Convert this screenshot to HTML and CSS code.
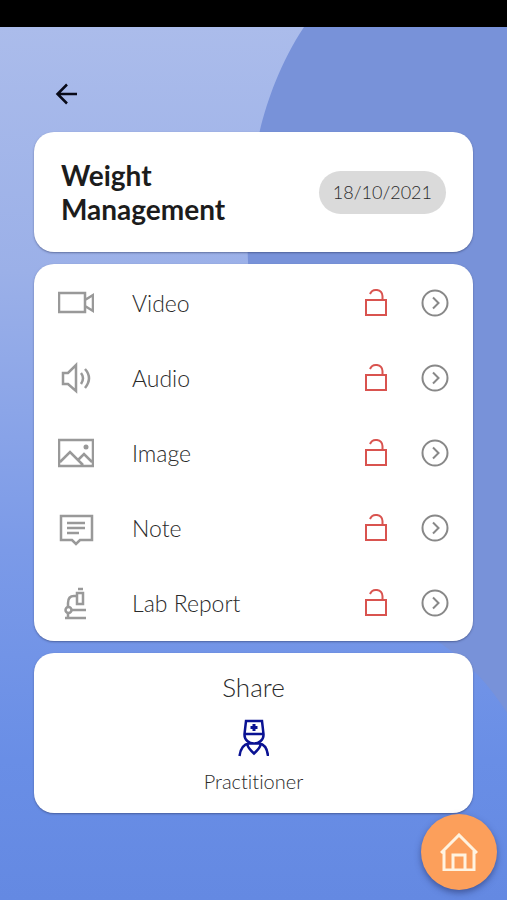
FILE: index.html
```html
<!DOCTYPE html>
<html lang="en">
<head>
  <meta charset="UTF-8" />
  <meta name="viewport" content="width=device-width, initial-scale=1.0" />
  <title>Weight Management</title>
  <link rel="stylesheet" href="styles.css">
</head>
<body>
  <svg width="0" height="0" class="sprite" aria-hidden="true">
    <symbol id="lock" viewBox="0 0 24 30">
      <path d="M2 12H22V27H2ZM18.500 12V8A6.500 6.500 0 0 0 6 6" />
    </symbol>
    <symbol id="next" viewBox="0 0 28 28">
      <circle cx="14" cy="14" r="12.500" />
      <path d="M12 8.500L17.500 14L12 19.500" />
    </symbol>
  </svg>

  <div class="status-bar"></div>
  <div class="screen">
    <svg class="backdrop" viewBox="0 0 507 872" preserveAspectRatio="none" aria-hidden="true">
      <path d="M304 0C281 34 267 74 260 103C250 150 246 190 248 234C252 392 320 522 440 615C470 636 490 658 507 685V0Z" />
    </svg>

    <header class="top">
      <button class="back" aria-label="Back">
        <svg viewBox="0 0 24 24"><path d="M22 12H3M12 2.500L2.500 12L12 21.500" /></svg>
      </button>
    </header>

    <main class="cards">
      <section class="card title-card">
        <h1>Weight Management</h1>
        <time class="date" datetime="2021-10-18">18/10/2021</time>
      </section>

      <ul class="card list">
        <li class="row">
          <svg class="icon" viewBox="0 0 36 36"><path d="M1 8H27V27H1ZM27 15L35 10V26L27 21" /></svg>
          <span class="label">Video</span>
          <button class="lock" aria-label="Unlock video"><svg><use href="#lock" /></svg></button>
          <button class="next" aria-label="Open video"><svg><use href="#next" /></svg></button>
        </li>
        <li class="row">
          <svg class="icon" viewBox="0 0 36 36"><path d="M5 13H10L18 5V31L10 24H5ZM23 13Q27 18 23 24M27 9Q35 18 27 28" /></svg>
          <span class="label">Audio</span>
          <button class="lock" aria-label="Unlock audio"><svg><use href="#lock" /></svg></button>
          <button class="next" aria-label="Open audio"><svg><use href="#next" /></svg></button>
        </li>
        <li class="row">
          <svg class="icon" viewBox="0 0 36 36"><path d="M1 5H35V31H1ZM2 27L12 17L25 30M20 25L26 19L34 27" /><circle class="dot" cx="28" cy="12" r="2.500" /></svg>
          <span class="label">Image</span>
          <button class="lock" aria-label="Unlock image"><svg><use href="#lock" /></svg></button>
          <button class="next" aria-label="Open image"><svg><use href="#next" /></svg></button>
        </li>
        <li class="row">
          <svg class="icon" viewBox="0 0 36 36"><path d="M3 6H34V30H22L18 34L14 30H3ZM9 13H27M9 18H27M9 23H21" /></svg>
          <span class="label">Note</span>
          <button class="lock" aria-label="Unlock note"><svg><use href="#lock" /></svg></button>
          <button class="next" aria-label="Open note"><svg><use href="#next" /></svg></button>
        </li>
        <li class="row">
          <svg class="icon" viewBox="0 0 36 36"><path d="M7 33H28M14 25H28M10 28V33M10 22V18Q10 11 16 11H19M19 8H25V19H19ZM20 4H25" /><circle cx="10.500" cy="25" r="3" /></svg>
          <span class="label">Lab Report</span>
          <button class="lock" aria-label="Unlock lab report"><svg><use href="#lock" /></svg></button>
          <button class="next" aria-label="Open lab report"><svg><use href="#next" /></svg></button>
        </li>
      </ul>

      <section class="card share">
        <h2>Share</h2>
        <button class="practitioner">
          <svg viewBox="0 0 32 38"><path d="M9 2H25L26.500 15V16A9.500 8.500 0 0 1 7.500 16V15ZM7 15H27M2.500 37Q4 25.500 12 24.500H22Q30 25.500 31 37M10.500 26Q11 29 17 34.500Q23 29 23.500 26" /><path class="cross" d="M17 5V12M13.500 8.500H20.500" /></svg>
          <span>Practitioner</span>
        </button>
      </section>
    </main>

    <a class="home" href="#" aria-label="Home">
      <svg viewBox="0 0 38 38"><path d="M1 20L19 2L37 20M4 18V37H34V18M13 37V22H25V37" /></svg>
    </a>
  </div>
</body>
</html>
```

FILE: styles.css
```css
* {
  box-sizing: border-box;
}
body {
  margin: 0;
  min-height: 100vh;
  display: flex;
  flex-direction: column;
  font-family: Lato, 'Liberation Sans', sans-serif;
  font-weight: 300;
  font-variant-ligatures: none;
  color: #2a2a2a;
}
h1, h2, ul {
  margin: 0;
  padding: 0;
}
button {
  border: none;
  padding: 0;
  background: none;
  font: inherit;
  font-variant-ligatures: none;
  color: inherit;
  cursor: pointer;
}
svg {
  display: block;
  fill: none;
  stroke: currentColor;
  stroke-width: 2;
}
.sprite {
  position: absolute;
}
.status-bar {
  height: 27px;
  background: #000;
}
.screen {
  flex: 1;
  position: relative;
  background: linear-gradient(#abbceb, #9bb0e8 28%, #7b9ae8 60%, #698ee6 84%, #6489e2);
}
.backdrop {
  position: absolute;
  width: 100%;
  height: 100%;
  fill: #7892d9;
  stroke: none;
}
.top {
  position: relative;
  padding: 55px 55px 26px;
}
.back {
  display: block;
  color: #080a18;
}
.back svg {
  width: 24px;
  height: 24px;
  stroke-width: 2.5;
}
.cards {
  position: relative;
  display: flex;
  flex-direction: column;
  gap: 12px;
  padding: 0 34px;
}
.card {
  background: #fff;
  border-radius: 20px;
  box-shadow: 0 1px 2px rgba(40, 50, 90, 0.5);
}
.title-card {
  display: flex;
  align-items: center;
  justify-content: space-between;
  gap: 24px;
  min-height: 120px;
  padding: 24px 27px;
}
h1 {
  max-width: 200px;
  font-size: 28px;
  line-height: 34px;
  font-weight: 700;
  color: #1c1c1c;
}
.date {
  padding: 0 14px;
  border-radius: 22px;
  background: #dadada;
  font-size: 18px;
  line-height: 43px;
}
.list {
  padding: 1px 0;
  list-style: none;
}
.row {
  display: flex;
  align-items: center;
  height: 75px;
  padding: 0 24px;
}
.icon {
  width: 36px;
  height: 36px;
  color: #999;
  stroke-width: 2.5;
}
.dot {
  fill: #999;
  stroke: none;
}
.label {
  flex: 1;
  padding-left: 38px;
  font-size: 23px;
}
.lock {
  color: #d9534f;
}
.lock svg {
  width: 24px;
  height: 30px;
}
.next {
  margin-left: 33px;
  color: #888;
}
.next svg {
  width: 28px;
  height: 28px;
}
.share {
  display: flex;
  flex-direction: column;
  align-items: center;
  gap: 16px;
  padding: 18px 24px 20px;
}
.share h2 {
  font-size: 26px;
  line-height: 32px;
  font-weight: 300;
}
.practitioner {
  display: flex;
  flex-direction: column;
  align-items: center;
  gap: 12px;
  font-size: 20px;
  line-height: 24px;
}
.practitioner svg {
  width: 32px;
  height: 38px;
  color: #0a1293;
  stroke-width: 2.5;
}
.cross {
  stroke-width: 3;
}
.home {
  position: absolute;
  right: 10px;
  bottom: 10px;
  display: flex;
  align-items: center;
  justify-content: center;
  width: 76px;
  height: 76px;
  border-radius: 50%;
  background: #fc9f5b;
  box-shadow: 0 3px 6px rgba(30, 40, 90, 0.5);
  color: #fff3e0;
}
.home svg {
  width: 38px;
  height: 38px;
  stroke-width: 3;
}
```
